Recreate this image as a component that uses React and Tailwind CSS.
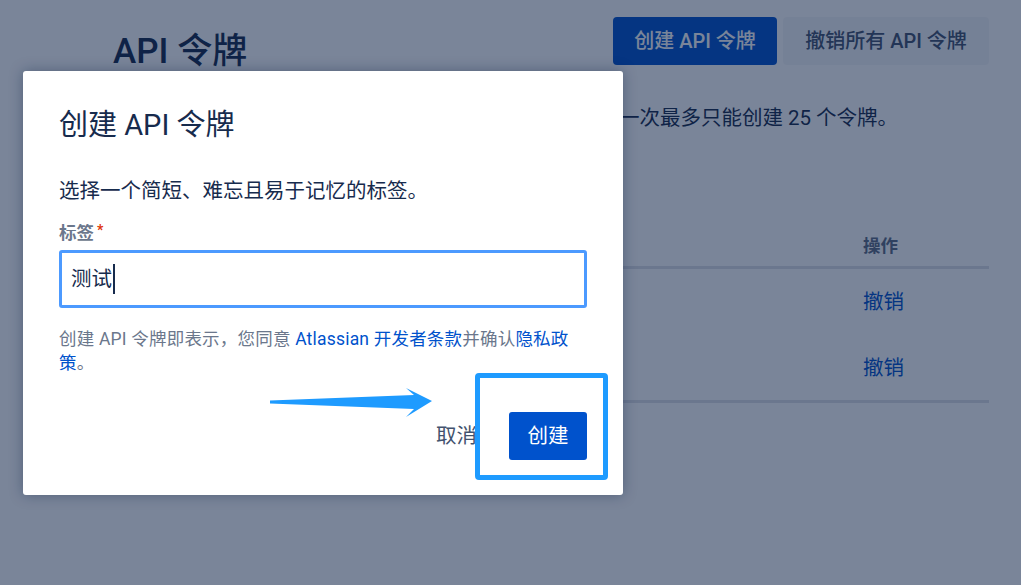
import React from "react";

export default function App() {
  return (
    <div className="relative h-screen w-full overflow-hidden bg-white font-[Roboto,'Noto_Sans_CJK_SC',sans-serif] text-[#172B4D]">
      {/* page behind the dialog */}
      <div className="pl-[113px] pr-[32px] pt-[17px]">
        <div className="flex h-[48px] items-start justify-between">
          <h1 className="mt-[15px] text-[35px] font-medium leading-[40px]">API 令牌</h1>
          <div className="flex gap-[6px]">
            <button className="h-[48px] w-[164px] rounded-[4px] bg-[#0052CC] text-[20px] font-medium text-white">创建 API 令牌</button>
            <button className="h-[48px] w-[206px] rounded-[4px] bg-[rgba(9,30,66,0.04)] text-[20px] font-medium text-[#42526E]">撤销所有 API 令牌</button>
          </div>
        </div>
        <p className="mt-[39px] text-[20.5px] leading-[28px]">
          您可以使用 API 令牌对 Atlassian 产品进行身份验证，您一次最多只能创建 25 个令牌。
        </p>
        <div className="mt-[89px]">
          <div className="flex border-b-[3px] border-[#DFE1E6] pb-[8px] pt-[13px] text-[17.5px] font-bold leading-[24px] text-[#5E6C84]">
            <div className="flex-1">标签</div>
            <div className="w-[126px]">操作</div>
          </div>
          <div className="flex h-[67px] items-center text-[20.5px]">
            <div className="flex-1">jira</div>
            <div className="w-[126px] text-[#0052CC]">撤销</div>
          </div>
          <div className="flex h-[67px] items-center border-b-[3px] border-[#DFE1E6] text-[20.5px]">
            <div className="flex-1">confluence</div>
            <div className="w-[126px] text-[#0052CC]">撤销</div>
          </div>
        </div>
      </div>

      {/* blanket */}
      <div className="absolute inset-0 bg-[rgba(9,30,66,0.54)]" />

      {/* dialog */}
      <div className="absolute left-[23px] top-[71px] w-[600px] rounded-[3px] bg-white px-[36px] pb-[35px] pt-[38px] shadow-[0_0_14px_rgba(9,30,66,0.35)]">
        <h2 className="text-[29px] font-normal leading-[32px]">创建 API 令牌</h2>
        <p className="mt-[36px] text-[20.5px] leading-[28px]">选择一个简短、难忘且易于记忆的标签。</p>
        <label className="mt-[16px] block text-[17.5px] font-bold leading-[24px] text-[#6B778C]">
          标签<span className="ml-[3px] align-top text-[14px] leading-[18px] text-[#DE350B]">*</span>
        </label>
        <div className="mt-[5px] flex h-[58px] items-center rounded-[3px] border-[3px] border-[#4C9AFF] pl-[9px] text-[20.5px]">
          测试<span className="ml-[1px] inline-block h-[30px] w-[2px] bg-[#172B4D]" />
        </div>
        <p className="mt-[19px] pr-[14px] text-[17.5px] leading-[24px] tracking-[0.2px] text-[#6B778C]">
          创建 API 令牌即表示，您同意 <span className="text-[#0052CC]">Atlassian 开发者条款</span>并确认<span className="text-[#0052CC]">隐私政策</span>。
        </p>
        <div className="mt-[37px] flex justify-end gap-[14px]">
          <button className="h-[48px] px-[18px] text-[20.5px] text-[#42526E]">取消</button>
          <button className="relative z-10 h-[48px] w-[78px] rounded-[3px] bg-[#0052CC] text-[20.5px] text-white">创建</button>
        </div>

        {/* annotation: highlight box */}
        <div className="absolute left-[452px] top-[302px] h-[107px] w-[133px] rounded-[4px] border-[5px] border-[#1E9BFF] bg-white" />
        {/* annotation: arrow */}
        <svg className="absolute left-[245px] top-[315px]" width="170" height="34" viewBox="0 0 170 34">
          <polygon points="2,14.5 146,9 138,2 164,15 138,31 146,23 2,17.5" fill="#1E9BFF" />
        </svg>
      </div>
    </div>
  );
}
